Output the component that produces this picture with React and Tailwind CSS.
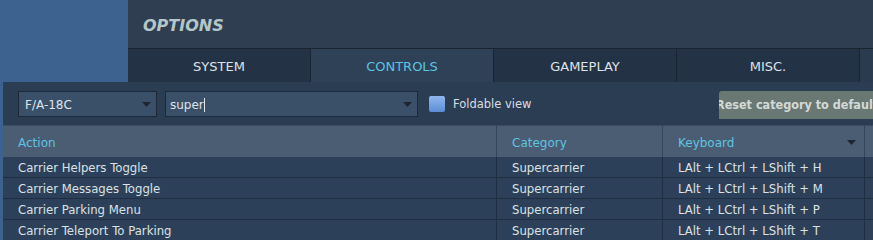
import React from 'react';

const tabs = ['SYSTEM', 'CONTROLS', 'GAMEPLAY', 'MISC.'];

const rows = [
  { action: 'Carrier Helpers Toggle', category: 'Supercarrier', key: 'LAlt + LCtrl + LShift + H' },
  { action: 'Carrier Messages Toggle', category: 'Supercarrier', key: 'LAlt + LCtrl + LShift + M' },
  { action: 'Carrier Parking Menu', category: 'Supercarrier', key: 'LAlt + LCtrl + LShift + P' },
  { action: 'Carrier Teleport To Parking', category: 'Supercarrier', key: 'LAlt + LCtrl + LShift + T' },
];

const Caret = ({ className }) => (
  <svg width="9" height="5" viewBox="0 0 9 5" className={className}>
    <path d="M0 0 L9 0 L4.5 5 Z" fill="#1c2633" />
  </svg>
);

const App = () => {
  return (
    <div
      className="w-[873px] h-[240px] overflow-hidden bg-[#3e6290] text-[#dfe4e8]"
      style={{ fontFamily: '"DejaVu Sans", Verdana, sans-serif' }}
    >
      {/* top bar */}
      <div className="flex h-[82px]">
        <div className="w-[128px] shrink-0" />
        <div className="flex-1 flex flex-col">
          <div className="h-[49px] bg-[#2f3e51] flex items-center pl-[15px] pt-[3px] border-b border-[#1a2431]">
            <span className="text-[16px] font-bold italic text-[#b3c6c8]">OPTIONS</span>
          </div>
          <div className="flex-1 flex bg-[#243245]">
            {tabs.map((t) => (
              <div
                key={t}
                className={`w-[183px] shrink-0 flex items-center justify-center pt-[2px] text-[13px] border-r border-[#1a2431] ${
                  t === 'CONTROLS' ? 'bg-[#2e4157] text-[#5cc3e2]' : 'bg-[#243245] text-[#dde3e8]'
                }`}
              >
                {t}
              </div>
            ))}
            <div className="flex-1 bg-[#2b3b4f]" />
          </div>
        </div>
      </div>

      {/* main panel */}
      <div className="ml-[3px] bg-[#2b3d53]">
        <div className="h-[43px] flex items-start pt-[9px] pl-[15px]">
          <div className="w-[139px] h-[26px] bg-[#3a5069] border border-[#1d2938] flex items-center justify-between pl-[6px] pr-[5px] pt-[1px] text-[12px]">
            <span>F/A-18C</span>
            <Caret />
          </div>
          <div className="ml-[8px] w-[253px] h-[26px] bg-[#3a5069] border border-[#1d2938] flex items-center justify-between pl-[4px] pr-[5px] pt-[1px] text-[12px]">
            <span className="flex items-center">
              super<span className="inline-block w-[1px] h-[14px] bg-[#dfe4e8]" />
            </span>
            <Caret />
          </div>
          <div className="ml-[11px] mt-[5px] w-[16px] h-[16px] rounded-[2px] bg-gradient-to-b from-[#8fb7ee] to-[#5c8ed6]" />
          <span className="ml-[8px] mt-[5px] text-[11.5px] leading-[16px] text-[#d7dde2]">Foldable view</span>
          <div className="ml-auto w-[154px] h-[28px] rounded-tl-[3px] bg-[#6a7874] overflow-hidden flex items-center">
            <span
              className="-ml-[3px] pt-[1px] whitespace-nowrap text-[12.5px] font-bold text-[#d3d9d6]"
              style={{ fontFamily: '"DejaVu Sans Condensed", "DejaVu Sans", sans-serif', fontStretch: 'condensed' }}
            >
              Reset category to default
            </span>
          </div>
        </div>

        {/* header row */}
        <div className="flex h-[32px] bg-[#4b5d72] text-[#5ec4e1] text-[12px] border-t border-[#3b4c60]">
          <div className="w-[494px] shrink-0 flex items-center pl-[15px] pt-[2px] border-r border-[#34465a]">Action</div>
          <div className="w-[166px] shrink-0 flex items-center pl-[15px] pt-[2px] border-r border-[#34465a]">Category</div>
          <div className="w-[202px] shrink-0 flex items-center justify-between pl-[15px] pr-[8px] pt-[2px] border-r border-[#34465a]">
            <span>Keyboard</span>
            <Caret />
          </div>
          <div className="flex-1" />
        </div>

        {/* data rows */}
        {rows.map((r) => (
          <div key={r.action} className="flex h-[21px] bg-[#2c4159] text-[11.7px] text-[#dbe1e6] border-b border-[#1f2e40]">
            <div className="w-[494px] shrink-0 flex items-center pl-[15px] pt-[3px] border-r border-[#1f2e40]">{r.action}</div>
            <div className="w-[166px] shrink-0 flex items-center pl-[15px] pt-[3px] border-r border-[#1f2e40]">{r.category}</div>
            <div className="w-[202px] shrink-0 flex items-center pl-[15px] pt-[3px] border-r border-[#1f2e40]">{r.key}</div>
            <div className="flex-1" />
          </div>
        ))}
      </div>
    </div>
  );
};

export default App;
